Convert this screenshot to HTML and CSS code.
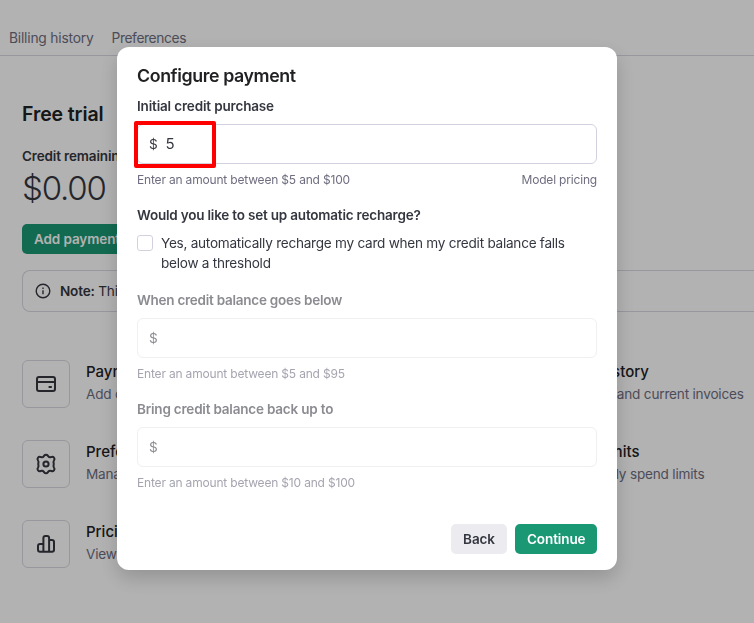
FILE: index.html
```html
<!doctype html>
<html lang="en">
<head>
    <meta charset="UTF-8">
    <title>Billing</title>
    <link rel="stylesheet" href="styles.css">
</head>
<body>

    <div class="page">
        <nav class="tabs">
            <a class="tab">Billing history</a>
            <a class="tab">Preferences</a>
        </nav>

        <main class="billing">
            <h2 class="plan">Free trial</h2>
            <div class="credit-label">Credit remaining</div>
            <div class="credit-value">$0.00</div>
            <button class="btn btn-primary btn-add">Add payment details</button>

            <div class="note">
                <svg class="note-icon" viewBox="0 0 16 16" width="16" height="16" fill="none" stroke="currentColor" stroke-width="1.4">
                    <circle cx="8" cy="8" r="6.8"/>
                    <path d="M8 7.2v4M8 4.6v1.5"/>
                </svg>
                <div><b>Note:</b> This does not reflect the status of your account.</div>
            </div>

            <div class="links">
                <div class="link">
                    <div class="link-icon">
                        <svg viewBox="0 0 24 24" width="24" height="24">
                            <rect x="3" y="4.9" width="18" height="14.2" rx="2"/>
                            <path d="M3 9.9h18M14.6 15h3.2"/>
                        </svg>
                    </div>
                    <div>
                        <div class="link-title">Payment methods</div>
                        <div class="link-text">Add or change payment method</div>
                    </div>
                </div>
                <div class="link">
                    <div class="link-icon"></div>
                    <div>
                        <div class="link-title">Billing history</div>
                        <div class="link-text">View past and current invoices</div>
                    </div>
                </div>
                <div class="link">
                    <div class="link-icon">
                        <svg viewBox="0 0 24 24" width="24" height="24">
                            <path d="M10.2 3.6a2.2 2.2 0 0 1 3.6 0l.5.7a2.2 2.2 0 0 0 2 .9l.9-.1a2.2 2.2 0 0 1 2.8 3.3l-.3.7a2.2 2.2 0 0 0 0 2l0 1.8a2.2 2.2 0 0 0 0 2l.3.7a2.2 2.2 0 0 1-2.8 3.3l-.9-.1a2.2 2.2 0 0 0-2 .9l-.5.7a2.2 2.2 0 0 1-3.6 0l-.5-.7a2.2 2.2 0 0 0-2-.9l-.9.1a2.2 2.2 0 0 1-2.8-3.3l.3-.7a2.2 2.2 0 0 0 0-2l0-1.8a2.2 2.2 0 0 0 0-2l-.3-.7a2.2 2.2 0 0 1 2.8-3.3l.9.1a2.2 2.2 0 0 0 2-.9Z"/>
                            <circle cx="12" cy="12" r="2.6"/>
                        </svg>
                    </div>
                    <div>
                        <div class="link-title">Preferences</div>
                        <div class="link-text">Manage billing information</div>
                    </div>
                </div>
                <div class="link">
                    <div class="link-icon"></div>
                    <div>
                        <div class="link-title">Usage limits</div>
                        <div class="link-text">Set monthly spend limits</div>
                    </div>
                </div>
                <div class="link">
                    <div class="link-icon">
                        <svg viewBox="0 0 24 24" width="24" height="24">
                            <path d="M9.4 19.8V6a2 2 0 0 1 2-2h1.7a2 2 0 0 1 2 2v13.8M9.4 12H6a2 2 0 0 0-2 2v3.8a2 2 0 0 0 2 2h12a2 2 0 0 0 2-2V10a2 2 0 0 0-2-2h-2.9"/>
                        </svg>
                    </div>
                    <div>
                        <div class="link-title">Pricing</div>
                        <div class="link-text">View pricing and FAQs</div>
                    </div>
                </div>
            </div>
        </main>
    </div>

    <div class="overlay">
        <div class="modal">
            <h1 class="modal-title">Configure payment</h1>

            <div class="field">
                <div class="label label-initial">Initial credit purchase</div>
                <div class="input">
                    <span class="currency">$</span>
                    <span class="amount">5</span>
                    <div class="highlight"></div>
                </div>
                <div class="help">
                    <span class="help-text">Enter an amount between $5 and $100</span>
                    <a class="help-link">Model pricing</a>
                </div>
            </div>

            <div class="label label-question">Would you like to set up automatic recharge?</div>
            <label class="check">
                <span class="box"></span>
                <span class="check-text">Yes, automatically recharge my card when my credit balance falls<br>below a threshold</span>
            </label>

            <div class="field disabled">
                <div class="label label-below">When credit balance goes below</div>
                <div class="input"><span class="currency">$</span></div>
                <div class="help"><span class="help-text">Enter an amount between $5 and $95</span></div>
            </div>

            <div class="field disabled">
                <div class="label label-upto">Bring credit balance back up to</div>
                <div class="input"><span class="currency">$</span></div>
                <div class="help"><span class="help-text">Enter an amount between $10 and $100</span></div>
            </div>

            <div class="actions">
                <button class="btn btn-neutral">Back</button>
                <button class="btn btn-primary">Continue</button>
            </div>
        </div>
    </div>

</body>
</html>
```
FILE: styles.css
```css
* {
    box-sizing: border-box;
}

body {
    margin: 0;
    height: 100vh;
    overflow: hidden;
    background: #fff;
    color: #353740;
    font-family: Inter, "Liberation Sans", sans-serif;
    font-size: 13.6px;
    line-height: 20px;
    letter-spacing: -0.2px;
}

h1, h2 {
    margin: 0;
    font-weight: 600;
    color: #202123;
}

/* tabs */
.tabs {
    display: flex;
    gap: 18px;
    height: 56px;
    padding: 28px 0 0 9px;
    border-bottom: 1px solid #d9d9e3;
}

.tab {
    color: #6e6e80;
    font-size: 13.8px;
}

.tab + .tab {
    letter-spacing: -0.4px;
}

/* page content */
.billing {
    padding: 46px 0 0 22px;
}

.plan {
    font-size: 19.5px;
    line-height: 24px;
    font-weight: 600;
    letter-spacing: -0.1px;
}

.credit-label {
    margin-top: 20px;
    font-size: 13.5px;
    font-weight: 600;
    letter-spacing: -0.15px;
}

.credit-value {
    margin: 2px 0 16px;
    font-size: 33px;
    line-height: 40px;
    font-weight: 300;
    letter-spacing: -1.2px;
}

.note {
    display: flex;
    align-items: center;
    gap: 9px;
    height: 42px;
    margin-top: 16px;
    padding: 0 12px;
    border: 1px solid #d9d9e3;
    border-right: 0;
    border-radius: 8px 0 0 8px;
}

.note b {
    font-weight: 600;
}

.links {
    display: grid;
    grid-template-columns: 466px 1fr;
    row-gap: 32px;
    margin-top: 48px;
    white-space: nowrap;
}

.link {
    display: flex;
    gap: 16px;
}

.link-icon {
    display: flex;
    flex-shrink: 0;
    align-items: center;
    justify-content: center;
    width: 48px;
    height: 48px;
    border: 1px solid #d9d9e3;
    border-radius: 6px;
}

.link-icon svg {
    fill: none;
    stroke: #353740;
    stroke-width: 2;
    stroke-linejoin: round;
}

.link-title {
    color: #202123;
    font-size: 15px;
    line-height: 24px;
    font-weight: 500;
    letter-spacing: 0;
}

.link-text {
    color: #6e6e80;
}

/* buttons */
.btn {
    height: 30px;
    padding: 0 12px;
    border: 0;
    border-radius: 5px;
    font: 600 13.5px/30px Inter, "Liberation Sans", sans-serif;
    letter-spacing: -0.1px;
    white-space: nowrap;
}

.btn-primary {
    background: #1a9874;
    color: #fff;
}

.btn-neutral {
    background: #ebebf0;
    color: #353740;
}

.btn-add {
    display: block;
}

/* modal */
.overlay {
    position: fixed;
    inset: 0;
    display: flex;
    justify-content: center;
    align-items: flex-start;
    padding: 47px 20px 0 0;
    background: rgba(0, 0, 0, 0.3);
}

.modal {
    width: 500px;
    height: 523px;
    padding: 16px 20px;
    display: flex;
    flex-direction: column;
    background: #fff;
    border-radius: 12px;
    box-shadow: 0 8px 20px rgba(0, 0, 0, 0.18);
}

.modal-title {
    font-size: 17.8px;
    line-height: 26px;
    letter-spacing: -0.4px;
}

.label {
    font-size: 13.5px;
    font-weight: 600;
    letter-spacing: -0.2px;
}

.label-initial {
    margin-top: 7px;
    letter-spacing: -0.16px;
}

.label-below {
    letter-spacing: -0.25px;
}

.input {
    position: relative;
    display: flex;
    align-items: center;
    gap: 8px;
    height: 40px;
    margin-top: 8px;
    padding: 0 11px;
    border: 1px solid #d2d2df;
    border-radius: 6px;
}

.amount {
    font-size: 15px;
}

/* marks the amount to fill in */
.highlight {
    position: absolute;
    left: -4px;
    top: -4px;
    width: 82px;
    height: 47px;
    border: 4px solid #f00;
    border-radius: 2px;
}

.help {
    display: flex;
    justify-content: space-between;
    margin-top: 6px;
    color: #6e6e80;
    font-size: 12px;
    letter-spacing: -0.18px;
}

.label-question {
    margin-top: 15px;
}

.check {
    display: flex;
    gap: 8px;
    margin-top: 8px;
}

.check-text {
    letter-spacing: -0.26px;
}

.box {
    width: 16px;
    height: 16px;
    margin-top: 2px;
    border: 1px solid #d2d2df;
    border-radius: 3px;
}

.disabled {
    margin-top: 17px;
}

.disabled + .disabled {
    margin-top: 15px;
}

.disabled .label,
.disabled .currency {
    color: #8b8c91;
}

.disabled .input {
    border-color: #f0f0f2;
}

.disabled .help {
    color: #a5a5b0;
}

.actions {
    display: flex;
    justify-content: flex-end;
    gap: 8px;
    margin-top: auto;
}

.actions .btn-neutral {
    width: 56px;
}

.actions .btn-primary {
    width: 82px;
}
```
